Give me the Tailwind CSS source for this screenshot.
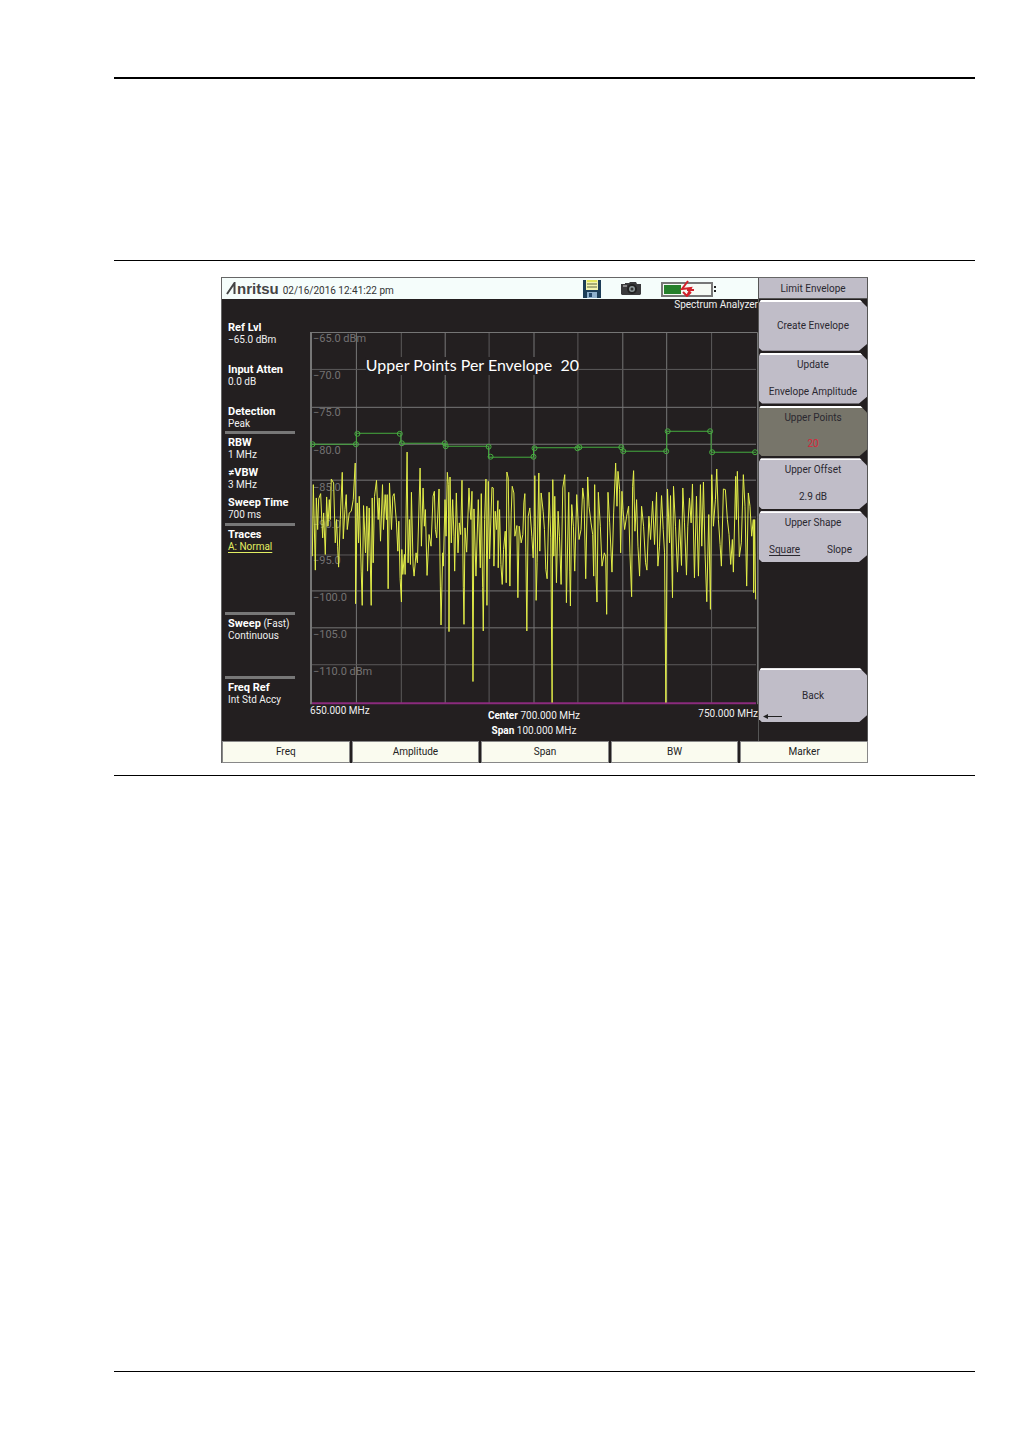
<!DOCTYPE html>
<html lang="en">
<head>
<meta charset="utf-8">
<title>Limit Envelope</title>
<script src="https://cdn.jsdelivr.net/npm/@tailwindcss/browser@4"></script>
</head>
<body class="bg-white font-[Roboto,sans-serif] text-[10px] leading-3">
<main class="ml-[114px] mr-[57px] pt-[77px]">
  <hr class="border-0 h-[2px] bg-black">
  <figure class="mt-[181px] border-y border-black pt-4 pb-3">
    <div class="mx-auto max-w-[647px] bg-[#231f20] border-t border-l border-[#666]">
      <div class="flex">
        <div class="flex-1 min-w-0 flex flex-col">
          <header class="flex items-center h-[21px] bg-[#f5fdfb] pl-1 text-[#333]">
            <svg class="w-[11px] h-[13px]" viewBox="0 0 11 13" aria-hidden="true"><path d="M1 12 8.500 1v11" fill="none" stroke="#444" stroke-width="2"/></svg>
            <span class="font-[Liberation_Sans,sans-serif] font-bold text-[15px] text-[#444]">nritsu</span>
            <time class="ml-1 pt-1">02/16/2016 12:41:22 pm</time>
            <div class="ml-auto flex items-center gap-5 pr-[42px]">
              <svg class="w-[18px] h-[19px]" viewBox="0 0 18 19" aria-hidden="true">
                <path d="M0 1h18v18H0z" fill="#1d3d57"/><path d="M3 1h12v10H3z" fill="#f4f5b0"/><path d="M4 1h10v2H4z" fill="#e2e65c"/><path d="M4 5h10M4 8h10" stroke="#5d6640"/><path d="M4 13h10v6H4z" fill="#8fb0cc"/><path d="M6 14h3v4H6z" fill="#25476a"/>
              </svg>
              <svg class="w-5 h-[15px]" viewBox="0 0 20 15" aria-hidden="true">
                <path d="M0 3h4V2h4l1-1h6l1 2h4v10l-1 1H1l-1-1z" fill="#3a3a3c"/><circle cx="11" cy="8" r="5" fill="#222"/><circle cx="11" cy="8" r="3" fill="#8d9799"/><circle cx="11" cy="8" r="1.500" fill="#333"/><path d="M2 4h4v2H2z" fill="#888"/>
              </svg>
              <svg class="w-[55px] h-[17px]" viewBox="0 0 55 17" aria-hidden="true">
                <path d="M1 3h50v13H1z" fill="#f6fbf5" stroke="#777" stroke-width="2"/><path d="M3 5h17v9H3z" fill="#25802b"/><path d="M53 6h2v2h-2zM53 10h2v2h-2z" fill="#222"/>
                <path d="m27 1-6 8 9-1-4 8M22 12l4 4 4-4M26 10h7" fill="none" stroke="#d2222b" stroke-width="2"/>
              </svg>
            </div>
          </header>
          <div class="flex flex-1 text-[#f0f0f0]">
            <aside class="w-[88px] shrink-0 pt-[23px] pl-[3px] pr-[15px] [&_b]:text-white [&_b]:text-[11px]">
              <dl class="grid gap-[18px] pl-[3px] whitespace-nowrap">
                <div><dt><b>Ref Lvl</b></dt><dd>−65.0 dBm</dd></div>
                <div><dt><b>Input Atten</b></dt><dd>0.0 dB</dd></div>
                <div><dt><b>Detection</b></dt><dd>Peak</dd></div>
              </dl>
              <hr class="border-0 h-[3px] bg-[#777] mt-[1px] mb-[3px]">
              <dl class="grid gap-[6px] pl-[3px] whitespace-nowrap">
                <div><dt><b>RBW</b></dt><dd>1 MHz</dd></div>
                <div><dt><b>≠VBW</b></dt><dd>3 MHz</dd></div>
                <div><dt><b>Sweep Time</b></dt><dd>700 ms</dd></div>
              </dl>
              <hr class="border-0 h-[3px] bg-[#777] mt-[2px] mb-[3px]">
              <div class="pl-[3px] h-[83px]"><b>Traces</b><br><span class="text-[#e2ee62] underline underline-offset-2">A: Normal</span></div>
              <hr class="border-0 h-[3px] bg-[#777] mb-[3px]">
              <div class="pl-[3px] h-[58px] whitespace-nowrap"><b>Sweep</b> (Fast)<br>Continuous</div>
              <hr class="border-0 h-[3px] bg-[#777] mb-[3px]">
              <div class="pl-[3px] whitespace-nowrap"><b>Freq Ref</b><br>Int Std Accy</div>
            </aside>
            <section class="flex-1 min-w-0">
              <h1 class="h-8 text-right">Spectrum Analyzer</h1>
              <svg class="block w-full h-auto" viewBox="0 0 449 375" role="img" aria-label="Spectrum trace">
                <path d="M46.500 1v372M135.500 1v372M224.500 1v372M313.500 1v372M357.500 1v372M2 76.500h445M2 113.500h445M2 149.500h445M2 260.500h445M2 297.500h445" stroke="#777" fill="none"/>
                <path d="M91.500 1v372M179.500 1v372M268.500 1v372M402.500 1v372M2 38.500h445M2 186.500h445M2 224.500h445M2 334.500h445" stroke="#5c5a5b" fill="none"/>
                <path d="M0 1.500h448.500V374" stroke="#777" fill="none"/>
                <path d="M1 1v373" stroke="#777" stroke-width="2"/>
                <g fill="#747273" font-size="11">
                  <text x="3" y="11">−65.0 dBm</text><text x="3" y="48">−70.0</text><text x="3" y="85">−75.0</text><text x="3" y="123">−80.0</text><text x="3" y="160">−85.0</text><text x="3" y="197">−90.0</text><text x="3" y="234">−95.0</text><text x="3" y="271">−100.0</text><text x="3" y="308">−105.0</text><text x="3" y="345">−110.0 dBm</text>
                </g>
                <path d="M2 373h445" stroke="#8b2b7d" stroke-width="2"/>
                <g fill="none" stroke="#e3ee48" stroke-width="3" stroke-linejoin="bevel">
                  <path transform="translate(-5 89) scale(.3333)" d="M22 410 25 195 31 452 34 235 38 330 41 238 47 222 53 355 56 280 61 405 65 232 69 320 73 240 76 300 79 178 86 190 91 370 95 300 98 380 101 443 106 300 112 158 115 358 120 270 124 225 127 330 133 280 139 275 145 240 151 130 152 553 157 250 161 370 163 230 169 455 172 558 176 258 182 400 186 260 188 455 193 265 199 558 202 235 205 430 209 230 215 182 220 300 223 235 227 365 233 195 236 330 241 225 245 300 247 225 250 508 254 190 260 330 264 230 268 222 275 310 279 395 282 305 286 478 290 548 291 390 294 465 299 405 301 465 307 97 310 430 314 300 317 435 320 218 325 440 328 470 334 400 338 430 346 145 350 380 355 205 359 320 362 270 367 468 373 345 379 380 385 230 389 215 392 330 396 355 403 208 407 500 409 617 414 400 416 440 421 240 424 350 428 158 431 195 433 637 436 172 440 370 444 240 448 350 450 455"/>
                  <path transform="translate(145 89) scale(.3333)" d="M0 455 5 220 10 400 14 310 18 345 22 182 26 505 28 615 31 325 36 398 43 205 46 265 49 300 52 215 55 787 58 268 64 470 71 240 77 445 80 222 84 505 86 635 90 300 94 178 97 558 101 185 105 418 112 203 116 205 118 440 122 275 126 330 130 243 131 445 135 270 139 435 143 495 147 390 152 335 155 490 157 157 161 175 166 500 170 280 173 200 178 220 181 350 187 318 190 535 194 320 200 370 205 345 208 250 211 222 214 398 217 635 221 290 226 265 232 350 236 415 239 320 241 168 245 543 248 430 253 160 256 395 260 220 266 275 270 330 274 450 278 478 284 218 289 355 293 850 295 180 298 410 301 230 306 490 311 275 315 350 320 495 325 205 331 165 336 550 343 218 346 455 348 560 352 255 357 320 361 455 367 225 374 360 380 330 385 205 389 240 394 478 400 172 404 260 410 310 415 345 418 470 421 195 425 470 428 548 432 218 438 320 443 440 450 400"/>
                  <path transform="translate(295 89) scale(.3333)" d="M0 400 4 410 7 585 11 218 16 310 23 458 28 280 34 130 38 260 41 155 46 210 49 400 53 215 56 270 61 330 67 290 73 260 77 400 82 532 85 200 88 153 92 335 97 240 101 380 106 470 112 260 118 320 124 430 128 452 134 290 139 360 145 245 151 375 157 218 161 440 166 380 172 228 177 330 181 400 185 850 190 208 196 370 199 228 205 535 208 200 214 320 220 458 226 300 232 438 236 205 241 310 247 467 251 320 256 235 261 310 265 193 271 475 277 230 283 470 289 195 293 380 298 187 303 405 308 547 314 285 319 570 323 165 328 320 334 240 338 148 343 300 348 375 352 440 358 208 364 210 370 300 375 345 380 435 385 360 388 458 395 170 397 300 400 155 406 412 412 370 418 165 423 260 428 500 433 220 438 260 443 350 448 300 449 520 452 300 455 540"/>
                </g>
                <g fill="none" stroke="#45ad3f">
                  <path d="M1 113.500h45.500V102.500h44.500V112.500h44v3h44V126.500h45v-9.500h44.500v-.500h44.500v4h44.500V100.500h44.500V121.500h45"/>
                  <circle cx="2.500" cy="113.500" r="2.500"/><circle cx="46" cy="113.500" r="2.500"/><circle cx="47.500" cy="103" r="2.500"/><circle cx="90" cy="103" r="2.500"/><circle cx="92" cy="112.500" r="2.500"/><circle cx="135" cy="112.500" r="2.500"/><circle cx="136" cy="115.500" r="2.500"/><circle cx="179" cy="116" r="2.500"/><circle cx="181" cy="126" r="2.500"/><circle cx="224" cy="126" r="2.500"/><circle cx="225" cy="117.500" r="2.500"/><circle cx="268" cy="117.500" r="2.500"/><circle cx="270" cy="116.500" r="2.500"/><circle cx="312" cy="116.500" r="2.500"/><circle cx="314" cy="120.500" r="2.500"/><circle cx="357" cy="120.500" r="2.500"/><circle cx="358.500" cy="100.500" r="2.500"/><circle cx="401" cy="100.500" r="2.500"/><circle cx="403" cy="121.500" r="2.500"/><circle cx="446" cy="121.500" r="2.500"/>
                </g>
                <path d="M56 26h208v18H56z" fill="#231f20"/>
                <text x="56" y="40" fill="#fff" font-size="16" font-family="Lato, sans-serif" xml:space="preserve">Upper Points Per Envelope  20</text>
              </svg>
              <div class="flex h-9 justify-between whitespace-nowrap">
                <span>650.000 MHz</span>
                <p class="text-center leading-[15px] pt-[3px]"><b class="text-white">Center</b> 700.000 MHz<br><b class="text-white">Span</b> 100.000 MHz</p>
                <span class="pt-[3px]">750.000 MHz</span>
              </div>
            </section>
          </div>
        </div>
        <nav class="w-[110px] shrink-0 flex flex-col border-x border-[#555] text-[#2a2830]">
          <h2 class="h-[21px] bg-[#c0bdc8] text-center leading-[21px] border-b border-[#555]">Limit Envelope</h2>
          <div class="grid grid-rows-5 h-[263px] gap-[2px] pt-[1px] [&>button]:bg-[#c0bdc8] [&>button]:border-t-2 [&>button]:border-white [&>button]:[clip-path:polygon(2px_0,101px_0,100%_7px,100%_44px,100px_100%,3px_100%,0_48px,0_3px)]">
            <button type="button">Create Envelope</button>
            <button type="button" class="flex flex-col items-center justify-between pt-1 pb-[6px]"><span>Update</span><span>Envelope Amplitude</span></button>
            <button type="button" class="flex flex-col items-center justify-between pt-1 pb-[6px] !bg-[#77756a]"><span>Upper Points</span><span class="text-[#d8263c]">20</span></button>
            <button type="button" class="flex flex-col items-center justify-between pt-1 pb-[6px]"><span>Upper Offset</span><span>2.9 dB</span></button>
            <button type="button" class="flex flex-col items-center justify-between pt-1 pb-[6px]"><span>Upper Shape</span><span class="flex w-full justify-between pl-[10px] pr-[15px]"><span class="underline underline-offset-2">Square</span><span>Slope</span></span></button>
          </div>
          <button type="button" class="relative mt-auto mb-[19px] h-[54px] bg-[#c0bdc8] border-t-2 border-white [clip-path:polygon(2px_0,101px_0,100%_7px,100%_47px,100px_100%,3px_100%,0_51px,0_3px)]">Back
            <svg class="absolute left-1 bottom-[2px] w-5 h-[7px]" viewBox="0 0 20 7" aria-hidden="true"><path d="M0 3.500 5 1v5zM5 3h14v1H5z" fill="#222"/></svg>
          </button>
        </nav>
      </div>
      <div class="grid grid-cols-5 h-[22px] gap-[2px] text-[#222] [&>button]:bg-[#fafbef] [&>button]:border [&>button]:border-[#888]">
        <button type="button">Freq</button><button type="button">Amplitude</button><button type="button">Span</button><button type="button">BW</button><button type="button">Marker</button>
      </div>
    </div>
  </figure>
  <hr class="mt-[595px] mb-[84px] border-0 h-px bg-black">
</main>
</body>
</html>
